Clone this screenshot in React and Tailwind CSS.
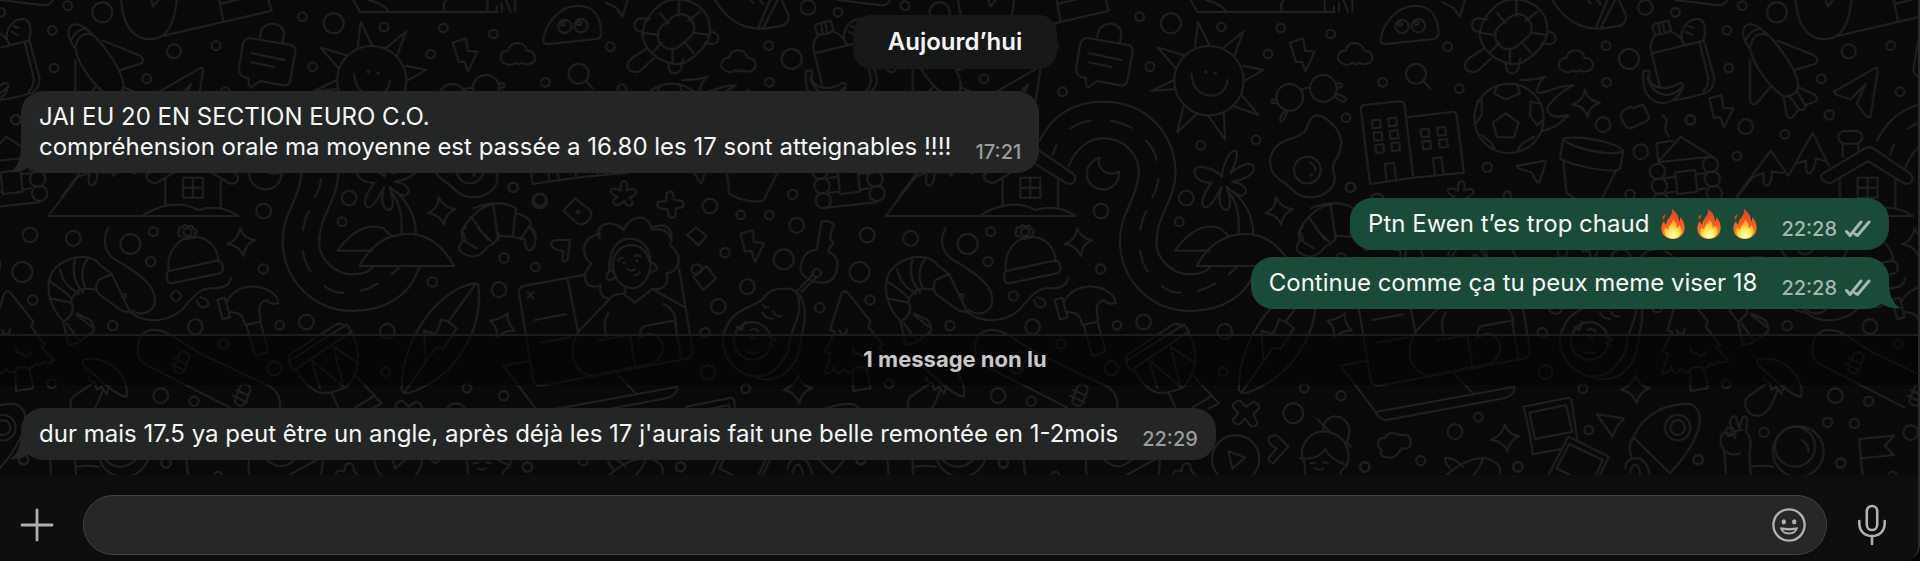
import React from 'react';

// [cx, cy, r] lists, one per section of the wallpaper
const dotsA = [
    [203, 17, 13], [307, 37, 30], [157, 91, 13], [162, 204, 13], [440, 236, 13], [522, 154, 21],
    [648, 137, 13], [676, 275, 13], [907, 50, 13], [1001, 70, 30], [938, 200, 13], [1152, 81, 13],
    [1292, 162, 13], [1330, 84, 13], [47, 359, 14], [791, 633, 22], [1047, 594, 22], [1026, 665, 13],
    [90, 705, 22], [220, 715, 22], [460, 695, 13], [391, 732, 30],
];
const dotsB = [
    [40, 102, 13], [391, 140, 13], [426, 266, 13], [196, 247, 13], [866, 137, 13], [868, 247, 13],
    [984, 22, 22], [1074, 37, 13], [935, 177, 30], [99, 562, 14], [179, 603, 22], [690, 618, 22],
    [782, 645, 13], [868, 645, 13], [938, 583, 14], [950, 676, 22], [254, 79, 20], [303, 77, 20],
    [296, 221, 30], [294, 636, 4], [248, 72, 6], [297, 70, 6],
];
const dotsC = [
    [1158, 353, 13], [1172, 562, 14], [888, 419, 13], [722, 436, 13], [1252, 600, 18], [747, 242, 104],
    [737, 215, 2], [766, 220, 2], [989, 292, 40], [1090, 265, 40], [1042, 510, 40], [1054, 525, 2],
];
const dotsD = [
    [489, 374, 22], [752, 360, 14], [917, 380, 22], [1034, 403, 13], [1168, 345, 14], [891, 468, 13],
    [602, 455, 22], [142, 502, 14], [207, 355, 104], [652, 514, 23], [658, 558, 23], [662, 602, 23],
    [811, 494, 23], [817, 537, 23], [823, 580, 23],
];
const dotsE = [
    [67, 126, 30], [98, 210, 14], [338, 287, 14], [452, 95, 14], [528, 198, 14], [586, 290, 22],
    [790, 117, 14], [839, 286, 13], [919, 276, 22], [670, 342, 14], [823, 415, 21], [155, 461, 13],
    [482, 497, 22], [582, 514, 14], [1162, 304, 22], [1157, 425, 13], [1297, 156, 14], [1401, 475, 13],
    [70, 690, 14], [498, 700, 14], [372, 198, 6], [563, 6, 12],
];
const dotsF = [
    [72, 84, 14], [166, 111, 13], [57, 179, 22], [735, 68, 14], [911, 88, 30], [802, 170, 22],
    [715, 229, 22], [675, 308, 14], [1019, 233, 14], [684, 427, 21], [797, 476, 13], [71, 497, 14],
    [142, 711, 14], [601, 711, 14], [650, 118, 15], [1011, 129, 12], [817, 333, 56], [432, 99, 2], [471, 92, 2],
];
const dotsG = [[1000, 550, 30], [1215, 711, 14], [1382, 692, 14], [827, 687, 71]];
const dotsH = [
    [115, 562, 13], [45, 605, 22], [446, 600, 13], [234, 710, 14], [775, 688, 14], [972, 607, 14],
    [1163, 577, 14], [1243, 580, 14], [1202, 698, 14], [1412, 608, 22], [1358, 737, 12],
    [713, 593, 38], [713, 593, 22], [870, 605, 13], [1075, 665, 76], [1065, 650, 60],
];

const officeWindows = [
    [1249, 372], [1298, 366], [1254, 409], [1302, 404], [1259, 446], [1307, 440],
    [1395, 399], [1400, 435], [1445, 394], [1450, 430],
];

function Dots({ items }) {
    return items.map(([cx, cy, r], i) => <circle key={i} cx={cx} cy={cy} r={r} />);
}

function Doodles() {
    return (
        <g id="doodles">
            {/* lifebuoy strap, parcel */}
            <g>
                <Dots items={dotsA} />
                <path d="M363 0C368 70 395 118 450 118C505 118 525 60 530 0M453 0L460 20L475 0M490 107L815 32L805 0M658 0L670 65M660 12L740 -8" />
                <path d="M235 530L145 648H715Q660 610 595 630Q520 590 430 645M0 0L125 15Q150 18 158 0" />
                <path d="M1060 0L1080 36H1492M1105 0Q1150 10 1165 33M1335 33Q1325 15 1338 0" />
            </g>

            {/* ghost, clouds, turtle, acorn */}
            <g transform="translate(1440 0)">
                <Dots items={dotsB} />
                <path d="M190 120C195 70 240 17 295 17C340 17 362 50 364 100Q362 115 350 117L205 132Q188 132 190 120z" />
                <path d="M75 190C55 185 58 150 85 152C88 122 135 120 140 152C170 150 175 190 145 192Q135 195 125 188Q115 198 105 188Q92 200 75 190z" />
                <path d="M737 212C717 207 720 172 747 174C750 144 797 142 802 174C832 172 837 212 807 214Q797 217 787 210Q777 220 767 210Q754 222 737 212z" />
                <path d="M317 243L338 265M377 8L408 23L427 50L443 0M22 0V35M50 35V18M65 10V35M92 35L78 0M105 0V35" />
                <path d="M488 100C490 60 530 10 570 0C640 -10 690 30 690 90C690 130 650 170 610 190C560 200 515 165 500 140C490 125 486 115 488 100z" />
                <rect x="530" y="55" width="116" height="80" rx="38" transform="rotate(-40 588 95)" />
                <path d="M597 0V48M660 35L625 62M640 98L690 105M615 128L640 158M578 145V192M545 128L515 160M535 105L488 98M540 40L565 70" />
                <path d="M488 95C460 100 455 60 480 55L510 58M690 95C720 95 725 130 695 133L675 128M565 192C563 230 605 230 605 192L609 177M500 145L455 175C425 200 455 225 480 213L522 175" />
                <path d="M705 0C740 60 790 88 850 86L905 78Q930 70 925 45L905 0M835 84L870 0M850 84L893 0M812 0L820 10M840 0L850 12" />
                <path d="M422 572Q420 545 432 543Q445 545 440 572Q468 560 468 577Q466 587 448 592Q465 610 452 617Q440 620 432 602Q415 622 402 612Q395 602 412 590Q388 582 392 570Q400 560 422 572z" />
                <path d="M560 580Q568 570 578 577L582 600L605 602Q615 610 608 622L588 625L585 650Q575 658 567 650L562 628L540 625Q528 618 533 606L558 603z" />
                <path d="M250 632L285 595L330 630Q340 645 325 662Q305 680 290 668z" />
                <path d="M40 615L55 720M-20 625Q60 595 108 625L98 710M108 640Q150 650 152 672L120 720M150 680Q165 690 168 715" />
                <path d="M360 715C335 670 400 655 432 690C450 640 510 640 515 690Q560 680 572 715" />
            </g>

            {/* chat bag, sun, glasses, egg, offices, road, palm */}
            <g transform="translate(2880 0)">
                <Dots items={dotsC} />
                <path d="M360 135Q365 112 385 115L505 135Q520 140 518 155L502 245Q498 258 480 256L412 243L385 262Q375 260 378 235Q350 230 348 210z" />
                <path d="M412 112C412 60 480 60 484 100L480 128M388 160L485 180M386 187L455 201" />
                <path d="M695 222C695 305 800 305 802 240M705 140L714 66L748 136M787 146L850 95L824 165M850 197L910 210L852 243M845 285L895 345L820 318M792 338L795 418L745 348M710 342L652 397L670 320M642 268L574 273L642 240M648 205L593 142L672 166" />
                <path d="M990 128L1030 115L1035 152L1064 155L1036 215L1026 185L1008 186z" />
                <path d="M1028 268Q1040 260 1050 265M950 300Q930 295 935 308L952 310M975 332Q955 355 962 365Q972 365 982 332M1128 252Q1145 245 1147 258Q1140 265 1130 262M1125 290Q1135 302 1150 305Q1165 300 1155 292L1130 282" />
                <path d="M1040 385C1050 350 1070 335 1095 355C1130 375 1150 410 1142 445C1130 490 1110 490 1122 520C1135 560 1090 600 1035 590C1000 585 990 555 960 540C920 510 920 460 960 430C1000 410 1030 410 1040 385zM1050 487Q1068 497 1066 512" />
                <path d="M1203 330Q1200 318 1212 315L1318 304Q1332 305 1334 318L1360 533L1230 552zM1342 352L1480 335Q1488 336 1490 348L1512 518L1360 533M1280 545L1274 492L1302 488L1308 540M1425 525L1418 475L1445 472L1450 520" />
                {officeWindows.map(([x, y]) => (
                    <rect key={`${x}-${y}`} x={x - 12} y={y - 12} width="24" height="24" transform={`rotate(-7 ${x} ${y})`} />
                ))}
                <path d="M240 420C290 320 370 305 430 305C560 305 645 400 647 520C645 600 590 650 590 720M325 500C350 440 390 415 430 415C500 415 537 470 537 520C530 600 480 640 480 720" />
                <path d="M330 387Q360 365 392 362M453 362Q490 368 515 384M558 422Q585 450 590 480M595 538Q590 570 577 592M558 635Q545 660 541 690M290 433L278 465" />
                <path d="M420 472C395 480 380 500 380 522C382 580 475 590 478 515C440 535 405 500 420 472z" />
                <path d="M785 530C790 490 810 450 825 452C840 460 825 490 812 520C850 485 885 485 882 508C875 530 845 540 815 545C860 550 870 580 845 587C825 585 810 570 800 560C815 600 812 630 798 630C775 625 775 590 785 560C770 590 750 625 735 622C715 610 735 575 755 548C720 550 700 530 704 510C715 490 765 505 785 530" />
                <path d="M810 580C835 620 838 650 836 700M820 575C860 610 878 650 880 700M948 592Q962 622 998 628Q968 640 964 674Q950 642 916 640Q948 625 948 592z" />
                <path d="M1018 690Q1060 620 1115 613M1045 650L1095 720M1018 690L1030 720" />
            </g>

            {/* football, backpack, shuttle, houses */}
            <g transform="translate(4320 0)">
                <Dots items={dotsD} />
                <path d="M197 340L236 368L222 412H172L158 368zM172 256L162 280L198 298L240 280L230 252M110 305L125 298V345L106 372M308 360L292 376L270 348L272 305L295 310M125 405L155 430L165 450M232 452L245 432L282 410" />
                <path d="M240 240Q280 240 315 230C290 250 285 285 300 278C330 275 360 255 400 256C370 270 320 310 322 330C330 355 360 352 385 345Q350 385 308 392" />
                <path d="M435 268Q442 302 480 308Q447 318 443 352Q435 318 397 314Q430 302 435 268z" />
                <path d="M545 340Q540 345 545 358L558 380Q562 387 575 384L620 363Q630 358 626 348L612 318Q606 313 598 317L580 325L572 320Q548 330 545 340z" />
                <path d="M637 80Q640 72 650 70L685 62L693 92Q680 100 667 102L645 105zM655 70L661 102M668 68L674 100M650 103C635 115 628 135 635 160L660 262M635 160L790 122M693 95Q720 105 732 132M727 125C715 90 745 55 775 57C800 62 798 100 790 122M745 78L760 84M738 95L756 105M778 125L805 235Q805 260 790 275M792 122L823 235Q823 265 800 278Q760 292 705 300" />
                <path d="M610 212H628V240Q640 265 675 265Q705 260 715 250Q732 245 728 262C710 320 630 330 612 260Q608 235 610 212M622 232C640 290 690 300 725 262" />
                <path d="M808 295L845 285L850 325L880 325L852 382L840 350L822 355zM668 346Q688 361 676 376Q674 396 688 410" />
                <path d="M930 145C900 110 905 75 930 73C970 70 1075 200 1075 260C1070 285 1050 290 1030 290C990 260 940 200 930 145zM930 145C935 110 955 95 980 105M918 120Q930 90 962 85M1012 122L1120 165Q1138 175 1130 190L1065 210M930 180V305Q935 318 950 310L990 262M1072 260L1125 285Q1138 295 1125 305L1095 315M1030 290L1040 345Q1045 358 1058 352L1075 330M1050 290L1075 325Q1090 338 1098 320L1072 275" />
                <path d="M1182 275L1305 204Q1315 202 1313 212L1292 348Q1285 355 1278 348L1250 312L1277 252L1232 298L1188 284z" />
                <rect x="1195" y="393" width="72" height="38" rx="19" />
                <path d="M1208 432V470M1255 432V450M1150 520L1275 445Q1288 438 1300 445L1410 520Q1425 535 1412 548Q1400 555 1388 548L1284 483L1175 548Q1155 552 1145 535Q1140 525 1150 520zM1200 535V615M1366 540V625M1253 533H1313V593H1253zM1283 533V593M1253 563H1313" />
                <path d="M890 590L992 452L1045 528L1118 398L1168 500M935 532L972 518Q965 555 980 557Q998 550 995 515L1030 518M1068 490L1098 482Q1095 520 1108 520Q1125 510 1128 475L1160 485" />
                <path d="M370 415C430 405 540 430 550 455L540 505Q535 512 520 512C460 510 380 490 360 475zM370 415C380 440 500 470 550 455M370 485L380 580Q422 610 482 603L528 512" />
                <path d="M230 498L312 482Q320 482 316 492L298 545Q295 552 290 545L275 518L235 505z" />
                <path d="M655 485L650 430L700 422M655 485L722 410L820 472M655 487L810 470M675 535L705 530M770 522L795 520M680 578L710 575M770 570L797 565M706 517L765 510L772 575L712 582zM667 623L822 607" />
            </g>

            {/* shrimp, hat, hammer, skateboard, drum, surfboard */}
            <g transform="translate(0 690)">
                <Dots items={dotsE} />
                <path d="M190 275C140 220 130 150 170 110C220 70 280 75 300 105L335 132L390 245Q370 248 355 235L300 195Q280 175 295 150L335 132M290 180Q260 172 240 180Q210 200 215 220Q228 250 195 272M180 118Q190 165 225 183M225 90Q212 140 240 175M148 205L215 218M150 155Q190 180 215 205M265 85Q235 120 255 172M190 275L205 345L235 338L280 305Q285 285 270 270L230 250M200 280L240 335M230 255L275 290M235 180V192M248 178V190" />
                <path d="M390 245C430 280 500 280 545 240C580 200 600 170 640 175Q690 175 692 143M590 210Q600 245 625 225Q625 205 600 202M325 -5C300 40 320 80 365 100C430 140 465 170 465 210C465 250 420 260 395 240" />
                <path d="M505 120C500 60 540 20 580 20C630 20 655 60 655 95M510 122L650 92Q665 92 668 105Q672 125 660 130L515 160Q500 160 500 140Q500 125 510 122zM545 20Q528 15 538 3Q532 -8 548 -8Q555 -20 565 -10Q580 -18 580 -3Q598 0 585 12Q590 28 572 22Q560 34 552 22" />
                <path d="M720 -5Q730 25 765 30Q735 40 731 78Q715 45 682 42Q715 30 720 -5z" />
                <path d="M652 210L675 203L690 262L668 268zM680 215C700 180 730 168 765 170C810 172 835 200 835 220Q810 225 800 210Q780 215 778 235L782 275L735 285Q730 250 705 248L690 246M740 288L765 378L805 365L782 278" />
                <path d="M690 533L430 400C400 370 410 305 455 300C500 295 530 330 600 370L790 460Q845 480 840 535" />
                <rect x="528" y="365" width="32" height="66" rx="14" transform="rotate(22 544 398)" />
                <rect x="712" y="462" width="32" height="66" rx="14" transform="rotate(22 728 495)" />
                <path d="M522 385L560 402M512 402L556 422M708 480L746 497M698 497L742 517" />
                <path d="M868 375L1010 282Q1025 278 1035 290M868 375Q860 395 880 422L1055 305L1040 283L868 393M890 420Q920 475 960 488Q1000 492 1040 470Q1100 400 1055 310M935 390L960 475M935 390L1030 470L1000 350L1075 400M995 490L1015 533M1070 440L1145 520L1115 535M1120 500L1065 533" />
                <path d="M1425 160C1300 180 1200 350 1205 480Q1210 495 1230 488C1370 440 1450 300 1435 165zM1425 165L1345 275L1370 295L1328 358L1308 352L1215 485M1345 275L1325 268L1308 312L1272 302L1278 395" />
                <path d="M250 390C310 370 390 430 380 500C350 500 290 440 250 405Q245 395 250 390zM270 440L265 450L285 455L220 500Q205 515 215 535Q225 560 256 557Q286 550 308 480M285 455L290 480L305 470L320 492L328 467" />
                <path d="M848 25C845 150 940 243 1060 243C1150 243 1230 200 1257 112M958 25C950 80 1000 133 1060 133C1090 133 1110 125 1120 108M908 62Q915 100 932 125M974 168Q1000 190 1030 188M1082 182Q1110 175 1135 160M1175 133L1198 112" />
                <path d="M1115 62H1013Q1080 -30 1150 -5L1175 20M1078 108Q1130 12 1225 12Q1310 12 1362 108z" />
            </g>

            {/* reader with laptop, avocado, fir tree */}
            <g transform="translate(1440 690)">
                <Dots items={dotsF} />
                <path d="M60 18Q120 20 135 30Q135 60 150 62Q170 50 165 20L155 -5M-42 -10Q-62 5 -52 30L-62 50Q-67 70 -22 80Q8 75 23 50Q53 40 56 10M-52 30L-10 55M-5 -5L35 35" />
                <path d="M270 30L262 90Q255 100 247 90L250 62Q215 60 213 42Q215 28 240 30z" />
                <path d="M388 120C385 40 430 25 450 26C490 26 512 60 512 100C510 150 480 175 455 175C420 172 398 140 398 100C405 60 430 45 452 45C480 45 500 60 508 95M362 -5Q350 0 360 12Q310 20 312 65Q320 95 335 100Q300 140 325 165Q345 175 362 165Q355 200 385 205M512 -5Q550 -25 570 0Q580 20 570 45Q610 80 590 110Q580 130 560 130Q570 180 520 178M398 120Q376 125 380 145Q390 155 405 143M515 98Q533 106 530 118Q522 126 512 126M443 118Q453 126 465 118M415 92Q420 82 428 84M465 78Q475 72 482 80M465 135Q478 135 480 125" />
                <path d="M435 175V190L400 195L295 305Q270 350 280 390Q300 440 345 435L520 400Q550 380 548 345Q540 310 505 312L475 325M515 175L610 230M435 195L465 218L515 178M385 248Q365 280 380 320M355 332L450 315L465 405M550 222Q590 240 588 290M480 318Q480 290 495 288L580 272" />
                <path d="M310 135L130 168Q115 175 117 190L160 450Q165 468 185 467L625 385Q640 378 638 360L597 115M263 148L293 300M585 280L605 390M142 185L160 205M160 185L142 205M165 270L258 253M178 338L272 322M150 392L70 407L178 550Q188 570 208 570L560 505Q592 495 592 470L180 545M410 430L467 490" />
                <path d="M30 272Q60 270 83 250Q80 280 104 302Q75 300 50 325Q55 290 30 272zM622 15L648 -8L680 18L655 46zM640 140L680 108L708 145L670 180z" />
                <path d="M782 12L818 0L822 35L852 40L825 97L815 62L795 65zM1025 -25L1010 60Q965 60 962 120Q970 150 1020 158Q1075 160 1072 95Q1065 70 1045 65Q1050 45 1060 40L1050 25L1055 0L1062 -15Q1050 -30 1025 -25M1000 132L950 185M1010 142L965 185" />
                <path d="M880 180Q950 165 955 200C970 260 930 290 925 360C900 420 860 445 810 438C740 415 710 340 740 290C760 235 830 230 850 205Q865 185 880 180M960 195C990 250 965 300 960 350C945 420 900 460 830 445M848 248Q858 268 878 266M880 245Q890 263 905 259M848 225Q855 235 865 232M800 365Q815 375 835 367M770 290L785 300L795 275M810 315Q815 328 828 325M812 300Q825 292 835 305M865 320Q885 320 887 328Q875 336 867 340L881 350" />
                <path d="M1050 300L1085 190Q1095 178 1105 190L1172 275L1165 290L1208 345L1195 350L1233 390Q1225 402 1200 395Q1195 412 1178 400Q1165 425 1145 410L1122 415Q1105 440 1090 415Q1075 445 1062 412Q1050 435 1035 430L1052 370L1035 365L1065 305zM1118 425L1120 483L1172 475L1160 415M1078 300Q1083 315 1093 312Q1103 310 1101 297M1118 355Q1125 375 1140 370L1145 378Q1160 380 1165 365" />
                <path d="M955 436Q965 470 997 474Q965 485 958 520Q945 485 912 480Q945 465 955 436z" />
            </g>

            {/* play button, chef */}
            <g transform="translate(2880 690)">
                <Dots items={dotsG} />
                <path d="M818 530Q822 512 840 512L858 530L880 515Q898 520 898 535L880 552L892 578Q888 592 872 588L855 565L840 582Q822 585 818 570L835 550zM805 663L855 683L817 716z" />
                <path d="M925 625Q940 610 955 620L985 650L940 700Q925 695 925 685L950 655Q925 645 925 625" />
                <path d="M1030 690C1010 640 1060 600 1097 605C1140 610 1170 640 1165 690L1160 710Q1145 715 1140 735M1095 655Q1080 690 1020 685M1095 655Q1110 690 1160 705M1032 690L1037 735M1090 600C1090 550 1150 545 1167 590Q1170 620 1160 635L1172 650M1073 568L1110 605M1065 715Q1080 723 1090 715M1052 700L1066 698M1090 697L1104 700" />
                <path d="M1255 650Q1250 620 1275 625Q1285 600 1320 615Q1355 610 1352 640Q1350 660 1325 655Q1305 690 1280 682Q1255 680 1265 660z" />
                <path d="M190 680L195 735M380 680Q375 710 380 735M600 680Q600 710 595 735M425 680Q470 735 520 685M500 735L600 680M640 735Q640 715 665 725Q665 700 680 700Q695 700 692 720L705 735" />
            </g>

            {/* polaroids, rocket, astronaut, flag */}
            <g transform="translate(4320 690)">
                <Dots items={dotsH} />
                <path d="M195 584Q205 615 237 619Q205 632 203 665Q190 632 153 630Q190 612 195 584z" />
                <path d="M362 658L278 673Q270 600 250 530L385 503Q395 505 395 515L412 630M268 548L378 525L397 605L285 627zM480 735L507 680L385 620L325 735M350 715L388 642L488 690L468 735M350 715L390 735" />
                <path d="M470 553L552 565L530 590L518 620zM580 622C610 550 680 520 750 522C800 540 790 620 690 730zM580 622Q560 650 575 680M555 715Q560 680 595 685Q620 690 630 735M570 730Q575 700 590 705Q600 715 600 735" />
                <path d="M858 735L852 660Q835 640 845 615Q855 600 875 615L870 575Q875 555 888 560L898 595L908 562Q920 555 922 570L918 605Q940 630 928 670L932 735M852 660Q870 680 900 670M885 625Q880 600 905 600M932 710Q970 705 1000 710M1085 630Q1105 640 1106 665" />
                <path d="M1268 735L1257 627L1362 617L1335 648L1362 675L1265 685M20 735Q80 680 140 685Q190 700 178 735M15 685Q40 680 70 712M128 690Q120 715 100 735M15 685Q15 700 30 715" />
            </g>
        </g>
    );
}

function Wallpaper() {
    return (
        <svg aria-hidden="true" className="absolute inset-0 h-full w-full">
            <defs>
                <pattern id="wallpaper" width="2512" height="3000" patternUnits="userSpaceOnUse" patternTransform="scale(0.33333)">
                    <g fill="none" stroke="#202020" strokeWidth="6" strokeLinecap="round" strokeLinejoin="round">
                        <Doodles />
                        <use href="#doodles" x="-2512" />
                        <use href="#doodles" x="-5024" />
                    </g>
                </pattern>
            </defs>
            <rect width="100%" height="100%" fill="url(#wallpaper)" />
        </svg>
    );
}

function Ticks() {
    return (
        <svg viewBox="0 0 26 18" className="h-[18px] w-[26px]" fill="none" stroke="currentColor" strokeWidth="3" strokeLinecap="round" strokeLinejoin="round">
            <path d="M1.500 11.500L5 15.500L16 2M10 14L12.500 15.500L24 2" />
        </svg>
    );
}

function Fire() {
    return (
        <svg role="img" aria-label="🔥" viewBox="0 0 72 90" className="h-[30px] w-6 shrink-0">
            <defs>
                <linearGradient id="flame" x1="0" y1="0" x2="0" y2="1">
                    <stop offset="0" stopColor="#e8401f" />
                    <stop offset="0.5" stopColor="#fb5a22" />
                    <stop offset="1" stopColor="#ff8a1c" />
                </linearGradient>
                <radialGradient id="core" cx="0.5" cy="0.85" r="0.75">
                    <stop offset="0" stopColor="#ffffd0" />
                    <stop offset="0.4" stopColor="#ffec55" />
                    <stop offset="1" stopColor="#ff9a28" />
                </radialGradient>
            </defs>
            <path fill="url(#flame)" d="M33 0C42 6 55 20 54 38C57 36 58 30 57 24C66 32 72 45 71 58C70 78 55 90 36 90C15 90 1 77 1 58C1 49 4 42 9 36C10 42 12 45 15 47C17 28 36 22 33 0z" />
            <path fill="#e8401f" d="M13 16C5 20 3 25 5 32C9 29 13 24 13 16z" />
            <path fill="url(#core)" d="M36 30C42 38 48 46 47 57C51 56 54 52 54 48C60 54 63 60 62 67C60 81 50 89 36 89C21 89 10 80 10 67C10 62 11 58 13 55C16 59 19 61 22 61C22 48 36 44 36 30z" />
        </svg>
    );
}

function Bubble({ time, mine, tail, children }) {
    return (
        <div className={mine ? 'flex justify-end pr-[29px]' : 'flex pl-[21px]'}>
            <div
                className={`relative flex items-end gap-6 rounded-[22px] px-[18px] py-[11px] ${
                    mine ? 'bg-[#184c38] text-[#a3b8ae]' : 'bg-[#242626] text-[#9b9c9c]'
                }`}
            >
                {tail && (
                    <svg
                        aria-hidden="true"
                        viewBox="0 0 30 30"
                        className={`absolute bottom-0 h-[30px] w-[30px] ${mine ? '-right-3 text-[#184c38]' : '-left-3 -scale-x-100 text-[#242626]'}`}
                    >
                        <path fill="currentColor" d="M18 0C18 16 21 24 29.5 29.2C22 30 15 28 10 24L4 10z" />
                    </svg>
                )}
                <p className="relative flex items-center text-2xl leading-[30px] text-[#f4f6f5]">{children}</p>
                <span className="relative flex items-center gap-2 text-xl leading-5 font-medium">
                    <time>{time}</time>
                    {mine && <Ticks />}
                </span>
            </div>
        </div>
    );
}

export default function App() {
    return (
        <div className="bg-[#050505] font-['Inter','Liberation_Sans',sans-serif]">
            <div className="overflow-hidden rounded-br-2xl border-r-2 border-[#2b2b2b] bg-[#0a0a0a]">
                <main className="relative py-[15px]">
                    <Wallpaper />
                    <div className="relative">
                        <div className="flex justify-center pr-2">
                            <h2 className="rounded-[18px] bg-[#171919] px-[35px] py-3 text-2xl leading-[30px] font-semibold text-[#f4f4f4]">
                                Aujourd’hui
                            </h2>
                        </div>

                        <div className="mt-[22px]">
                            <Bubble time="17:21" tail>
                                <span>
                                    JAI EU 20 EN SECTION EURO C.O.
                                    <br />
                                    compréhension orale ma moyenne est passée a 16.80 les 17 sont atteignables !!!!
                                </span>
                            </Bubble>
                        </div>

                        <div className="mt-[25px] flex flex-col gap-[7px]">
                            <Bubble time="22:28" mine>
                                <span>Ptn Ewen t’es trop chaud</span>
                                <span className="ml-3 flex gap-3">
                                    <Fire />
                                    <Fire />
                                    <Fire />
                                </span>
                            </Bubble>
                            <Bubble time="22:28" mine tail>
                                Continue comme ça tu peux meme viser 18
                            </Bubble>
                        </div>

                        <div className="mt-[25px] border-t-2 border-[#1c1c1c] bg-black/50 pt-2 pr-2 pb-[11px] text-center text-[22px] leading-[30px] font-bold text-[#c8c8c8]">
                            1 message non lu
                        </div>

                        <div className="mt-[23px]">
                            <Bubble time="22:29" tail>
                                dur mais 17.5 ya peut être un angle, après déjà les 17 j'aurais fait une belle remontée en 1-2mois
                            </Bubble>
                        </div>
                    </div>
                </main>

                <footer className="relative flex items-center bg-[#0e0e0e] pt-5 pr-[29px] pb-[6px] pl-[19px] text-[#b0b0b0]">
                    <button type="button" aria-label="Joindre" className="mr-7 shrink-0">
                        <svg viewBox="0 0 36 36" className="h-9 w-9" fill="none" stroke="currentColor" strokeWidth="2.8" strokeLinecap="round">
                            <path d="M18 3V33M3 18H33" />
                        </svg>
                    </button>
                    <div className="flex h-[60px] grow items-center rounded-full border border-[#424242] bg-[#262626] pr-[19px] pl-6">
                        <input
                            type="text"
                            aria-label="Message"
                            className="h-full min-w-0 grow bg-transparent text-2xl text-[#f4f6f5] outline-none"
                        />
                        <button type="button" aria-label="Emoji" className="shrink-0">
                            <svg viewBox="0 0 36 36" className="h-9 w-9" fill="none" stroke="currentColor" strokeWidth="2.4">
                                <circle cx="18" cy="18" r="15.6" />
                                <ellipse cx="12.8" cy="14.8" rx="2.2" ry="2.6" fill="currentColor" stroke="none" />
                                <ellipse cx="23.2" cy="14.8" rx="2.2" ry="2.6" fill="currentColor" stroke="none" />
                                <path fill="currentColor" fillRule="evenodd" stroke="none" d="M9 20.300Q18 21.500 27 20.300C26.500 25 22.500 27.500 18 27.500C13.500 27.500 9.500 25 9 20.300zM12 23C13.500 24.800 15.500 25.500 18 25.500C20.500 25.500 22.500 24.800 24 23Q18 23.800 12 23z" />
                            </svg>
                        </button>
                    </div>
                    <button type="button" aria-label="Message vocal" className="ml-7 shrink-0">
                        <svg viewBox="0 0 34 42" className="h-[42px] w-[34px]" fill="none" stroke="currentColor" strokeWidth="2.6" strokeLinecap="round">
                            <rect x="11.800" y="2" width="10.400" height="24" rx="5.200" />
                            <path d="M4.300 17V19.500C4.300 27 9.800 32 17 32S29.700 27 29.700 19.500V17M17 32V40" />
                        </svg>
                    </button>
                </footer>
            </div>
        </div>
    );
}
